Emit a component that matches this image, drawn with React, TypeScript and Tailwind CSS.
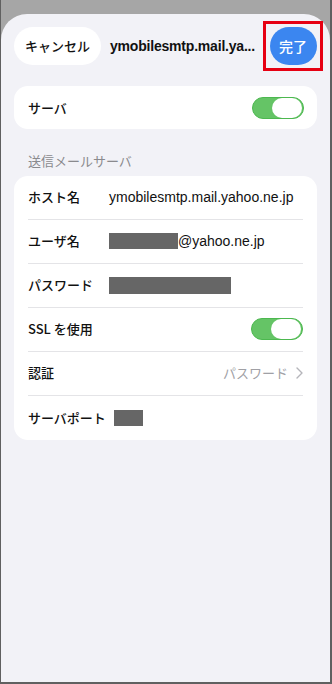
import React from "react";

const font = { fontFamily: '"Noto Sans CJK JP", "Liberation Sans", sans-serif' };
const latin = { fontFamily: '"Liberation Sans", "Noto Sans CJK JP", sans-serif' };

function Toggle() {
  return (
    <div className="w-[52px] h-[22px] rounded-full bg-[#65c466] border border-[#4cb84f] flex items-center justify-end pr-[1px]">
      <div className="w-[30px] h-[20px] rounded-full bg-white" />
    </div>
  );
}

function Row({ label, children, last }: { label: string; children?: React.ReactNode; last?: boolean }) {
  return (
    <div className={`flex items-center h-[44px] mr-[14px] ${last ? "" : "border-b border-[#e4e4e7]"}`}>
      <div className="w-[81px] shrink-0 whitespace-nowrap text-[13px] font-medium text-[#111]">{label}</div>
      <div className="flex-1 flex items-center min-w-0">{children}</div>
    </div>
  );
}

export default function App() {
  return (
    <div className="w-[332px] h-[684px] bg-[#a6a6a6] border-l border-r-2 border-b-2 border-[#606060] flex flex-col" style={font}>
      <div className="h-[14px] shrink-0" />
      <div className="flex-1 bg-[#f2f2f7] rounded-t-[26px] px-[13px]">
        {/* Header */}
        <div className="flex items-center h-[58px] pt-[6px]">
          <button className="shrink-0 whitespace-nowrap h-[38px] px-[11px] rounded-full bg-white text-[13px] font-medium text-[#111]">キャンセル</button>
          <div className="ml-[9px] text-[14px] font-bold text-[#111] whitespace-nowrap tracking-[-0.2px]" style={latin}>
            ymobilesmtp.mail.ya...
          </div>
          <div className="ml-auto shrink-0 w-[60px] h-[50px] border-[3px] border-[#e60012] flex items-center justify-center -mr-[6px]">
            <div className="w-[47px] h-[38px] rounded-full bg-[#3b86f0] text-white text-[14px] font-medium flex items-center justify-center">完了</div>
          </div>
        </div>

        {/* Server toggle */}
        <div className="mt-[14px] h-[43px] rounded-[14px] bg-white flex items-center pl-[14px] pr-[13px]">
          <div className="text-[13px] font-medium text-[#111]">サーバ</div>
          <div className="ml-auto"><Toggle /></div>
        </div>

        <div className="mt-[22px] pl-[14px] text-[13px] text-[#8a8a8e]">送信メールサーバ</div>

        <div className="mt-[5px] rounded-[14px] bg-white pl-[14px]">
          <Row label="ホスト名">
            <span className="text-[14px] text-[#111]" style={latin}>ymobilesmtp.mail.yahoo.ne.jp</span>
          </Row>
          <Row label="ユーザ名">
            <span className="w-[69px] h-[16px] bg-[#666]" />
            <span className="text-[14px] text-[#111]" style={latin}>@yahoo.ne.jp</span>
          </Row>
          <Row label="パスワード">
            <span className="w-[122px] h-[17px] bg-[#666]" />
          </Row>
          <Row label="SSL を使用">
            <div className="ml-auto"><Toggle /></div>
          </Row>
          <Row label="認証">
            <div className="ml-auto flex items-center gap-[8px] text-[13px] text-[#a0a0a5]">
              <span>パスワード</span>
              <svg width="7" height="12" viewBox="0 0 7 12" fill="none" stroke="#b5b5ba" strokeWidth="1.4" strokeLinecap="round" strokeLinejoin="round">
                <path d="M1 1l5 5-5 5" />
              </svg>
            </div>
          </Row>
          <Row label="サーバポート" last>
            <span className="ml-[5px] w-[29px] h-[16px] bg-[#666]" />
          </Row>
        </div>
      </div>
    </div>
  );
}
